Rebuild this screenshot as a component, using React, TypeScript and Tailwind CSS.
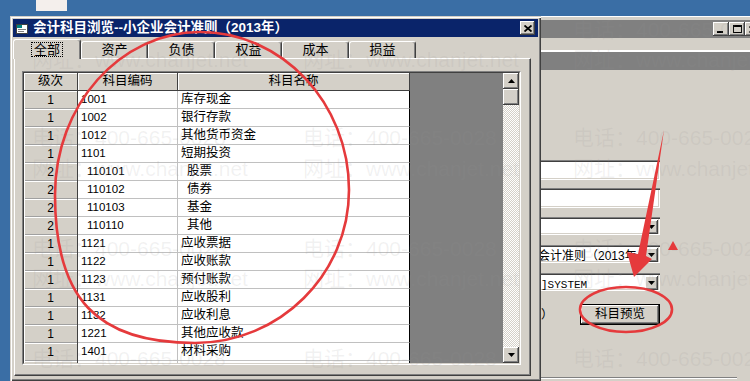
import React from 'react';

const raised =
  'bg-[#d4d0c8] shadow-[inset_-1px_-1px_#404040,inset_1px_1px_#ffffff,inset_-2px_-2px_#808080,inset_2px_2px_#d4d0c8]';

const rows: [string, string, string, boolean][] = [
  ['1', '1001', '库存现金', false],
  ['1', '1002', '银行存款', false],
  ['1', '1012', '其他货币资金', false],
  ['1', '1101', '短期投资', false],
  ['2', '110101', '股票', true],
  ['2', '110102', '债券', true],
  ['2', '110103', '基金', true],
  ['2', '110110', '其他', true],
  ['1', '1121', '应收票据', false],
  ['1', '1122', '应收账款', false],
  ['1', '1123', '预付账款', false],
  ['1', '1131', '应收股利', false],
  ['1', '1132', '应收利息', false],
  ['1', '1221', '其他应收款', false],
  ['1', '1401', '材料采购', false],
];

const tabs = ['全部', '资产', '负债', '权益', '成本', '损益'];

const TEL = '电话：400-665-0028';
const WEB = '网址：www.chanjet.net';

// watermark spots of the screenshot
const marks = [
  { c: 'left-[32px] top-[48px]', t: WEB },
  { c: 'left-[303px] top-[48px]', t: WEB },
  { c: 'left-[573px] top-[18px]', t: TEL },
  { c: 'left-[573px] top-[48px]', t: WEB },
  { c: 'left-[32px] top-[126px]', t: TEL },
  { c: 'left-[303px] top-[126px]', t: TEL },
  { c: 'left-[573px] top-[126px]', t: TEL },
  { c: 'left-[32px] top-[157px]', t: WEB },
  { c: 'left-[303px] top-[157px]', t: WEB },
  { c: 'left-[573px] top-[157px]', t: WEB },
  { c: 'left-[32px] top-[237px]', t: TEL },
  { c: 'left-[303px] top-[237px]', t: TEL },
  { c: 'left-[573px] top-[237px]', t: TEL },
  { c: 'left-[32px] top-[267px]', t: WEB },
  { c: 'left-[303px] top-[267px]', t: WEB },
  { c: 'left-[573px] top-[267px]', t: WEB },
  { c: 'left-[32px] top-[347px]', t: TEL },
  { c: 'left-[303px] top-[347px]', t: TEL },
  { c: 'left-[573px] top-[347px]', t: TEL },
];

function Arrow({ up }: { up?: boolean }) {
  return (
    <svg width="7" height="4" viewBox="0 0 7 4">
      <polygon points={up ? '3.5,0 7,4 0,4' : '0,0 7,0 3.5,4'} fill="#000" />
    </svg>
  );
}

function ScrollBtn({ up }: { up?: boolean }) {
  return (
    <div className={`w-[16px] h-[16px] shrink-0 flex items-center justify-center ${raised}`}>
      <Arrow up={up} />
    </div>
  );
}

function Grid() {
  return (
    <div className="w-[499px] h-[294px] flex border border-t-[#808080] border-l-[#808080] border-r-white border-b-white">
      <div className="flex-1 flex overflow-hidden border border-t-[#404040] border-l-[#404040] border-r-[#d4d0c8] border-b-[#d4d0c8]">
        <div className="w-[386px] flex flex-col">
          {/* header */}
          <div className="flex h-[18px] shrink-0 text-[12.5px]">
            <div className="w-[54px] h-full flex items-center justify-center bg-[#d4d0c8] border-r border-b border-[#404040] shadow-[inset_1px_1px_#ffffff]">级次</div>
            <div className="w-[100px] h-full flex items-center justify-center bg-[#d4d0c8] border-r border-b border-[#404040] shadow-[inset_1px_1px_#ffffff]">科目编码</div>
            <div className="w-[232px] h-full flex items-center justify-center bg-[#d4d0c8] border-r border-b border-[#404040] shadow-[inset_1px_1px_#ffffff]">科目名称</div>
          </div>
          {rows.map(([lv, code, name, sub]) => (
            <div key={code} className="flex h-[18px] shrink-0">
              <div className="w-[54px] h-full flex items-center justify-center bg-[#d4d0c8] border-r border-r-[#404040] shadow-[inset_1px_1px_#ffffff,inset_0_-1px_#a0a0a0] text-[12px]">
                {lv}
              </div>
              <div className={`w-[100px] h-full flex items-center bg-white border-r border-b border-[#c0c0c0] text-[11.5px] ${sub ? 'pl-[9px]' : 'pl-[3px]'}`}>
                {code}
              </div>
              <div className={`w-[232px] h-full flex items-center bg-white border-b border-b-[#c0c0c0] border-r border-r-black text-[12.5px] ${sub ? 'pl-[9px]' : 'pl-[3px]'}`}>
                {name}
              </div>
            </div>
          ))}
          <div className="flex flex-1">
            <div className="w-[54px] h-full bg-[#d4d0c8] border-r border-r-[#404040] shadow-[inset_1px_1px_#ffffff]" />
            <div className="w-[100px] h-full bg-white border-r border-[#c0c0c0]" />
            <div className="w-[232px] h-full bg-white border-r border-r-black" />
          </div>
        </div>
        <div className="w-[93px] h-full bg-[#808080]" />
        <div className="w-[16px] h-full flex flex-col bg-[image:repeating-conic-gradient(#d4d0c8_0%_25%,#ffffff_0%_50%)] bg-[length:2px_2px]">
          <ScrollBtn up />
          <div className={`w-[16px] h-[16px] shrink-0 ${raised}`} />
          <div className="flex-1" />
          <ScrollBtn />
        </div>
      </div>
    </div>
  );
}

function Dialog() {
  return (
    <div className="w-[531px] h-full shrink-0 flex flex-col p-[3px] bg-[#d4d0c8] shadow-[inset_1px_1px_#d4d0c8,inset_2px_2px_#ffffff,inset_-1px_-1px_#404040,inset_-2px_-2px_#808080]">
      {/* title bar */}
      <div className="h-[18px] shrink-0 flex items-center bg-[#0a246a] pl-[3px] pr-[3px]">
        <svg width="13" height="13" viewBox="0 0 13 13">
          <rect x="0.5" y="2.5" width="11" height="9" fill="#ffffff" stroke="#404040" />
          <rect x="1" y="3" width="5" height="3" fill="#008080" />
          <rect x="2" y="7" width="8" height="1" fill="#808080" />
          <rect x="2" y="9" width="6" height="1" fill="#808080" />
        </svg>
        <span className="ml-[4px] text-white font-bold text-[13.5px] leading-none">会计科目浏览--小企业会计准则（2013年）</span>
        <div className={`ml-auto w-[15px] h-[14px] flex items-center justify-center ${raised}`}>
          <svg width="8" height="7" viewBox="0 0 8 7">
            <path d="M0.5 0.5 L7.5 6.5 M7.5 0.5 L0.5 6.5" stroke="#000" strokeWidth="1.8" />
          </svg>
        </div>
      </div>
      {/* tabs */}
      <div className="h-[21px] shrink-0 flex items-end text-[13px]">
        {tabs.map((t, i) =>
          i === 0 ? (
            <div key={t} className="relative z-10 w-[68px] h-[20px] -mb-[1px] flex items-center justify-center bg-[#d4d0c8] border-t border-l border-white border-r border-r-[#404040] rounded-t-[3px] shadow-[inset_-1px_0_#808080]">
              <span className="px-[2px] border border-dotted border-black leading-[13px]">{t}</span>
            </div>
          ) : (
            <div key={t} className="w-[67px] h-[17px] flex items-center justify-center bg-[#d4d0c8] border-t border-l border-white border-r border-r-[#404040] rounded-t-[3px] shadow-[inset_-1px_0_#808080]">
              {t}
            </div>
          )
        )}
      </div>
      {/* panel */}
      <div className="w-[517px] h-[318px] ml-[1px] pl-[7px] pt-[12px] border border-t-white border-l-white border-r-[#404040] border-b-[#404040] shadow-[inset_-1px_-1px_#808080]">
        <Grid />
      </div>
    </div>
  );
}

function SmallBtn({ kind }: { kind: 'min' | 'max' | 'close' }) {
  return (
    <div className={`w-[16px] h-[14px] shrink-0 flex items-center justify-center ${raised}`}>
      {kind === 'min' && <div className="w-[6px] h-[2px] bg-black mt-[6px] -ml-[2px]" />}
      {kind === 'max' && <div className="w-[9px] h-[8px] border border-black border-t-2" />}
      {kind === 'close' && (
        <svg width="8" height="7" viewBox="0 0 8 7">
          <path d="M0.5 0.5 L7.5 6.5 M7.5 0.5 L0.5 6.5" stroke="#000" strokeWidth="1.8" />
        </svg>
      )}
    </div>
  );
}

const sunken =
  'bg-white shadow-[inset_0_1px_#808080,inset_0_2px_#404040,inset_-1px_0_#ffffff,inset_0_-1px_#ffffff,inset_-2px_0_#d4d0c8,inset_0_-2px_#d4d0c8]';

function Combo({ children }: { children?: React.ReactNode }) {
  return (
    <div className={`w-[119px] h-[18px] flex items-center overflow-hidden ${sunken}`}>
      <div className="flex-1 overflow-hidden whitespace-nowrap pt-[2px]">{children}</div>
      <div className={`w-[13px] h-[14px] mr-[2px] mt-[2px] flex items-center justify-center ${raised}`}>
        <Arrow />
      </div>
    </div>
  );
}

function RightWindow() {
  return (
    <div className="flex-1 min-w-0 h-full flex flex-col overflow-hidden bg-[#d4d0c8] border-t border-white">
      <div className="h-[3px] shrink-0" />
      <div className="h-[18px] shrink-0 bg-[#808080] flex items-center pl-[172px]">
        <SmallBtn kind="min" />
        <SmallBtn kind="max" />
        <div className="w-[2px]" />
        <SmallBtn kind="close" />
      </div>
      <div className="h-[12px] shrink-0" />
      <div className="h-[2px] shrink-0 bg-white" />
      <div className="h-[18px] shrink-0 bg-[#808080]" />
      <div className="flex flex-col pt-[90px]">
        <div className={`w-[119px] h-[20px] ${sunken}`} />
        <div className={`w-[119px] h-[20px] mt-[8px] ${sunken}`} />
        <div className="mt-[9px]">
          <Combo />
        </div>
        <div className="mt-[10px]">
          <Combo>
            <span className="-ml-[3px] text-[12px]">会计准则（2013年</span>
          </Combo>
        </div>
        <div className="mt-[10px]">
          <Combo>
            <span className="font-['Liberation_Mono',monospace] text-[11px]">]SYSTEM</span>
          </Combo>
        </div>
        <div className="mt-[13px] h-[21px] flex items-center">
          <span className="w-[39px] text-[12px]">）</span>
          <div className="w-[80px] h-[21px] border border-black">
            <div className={`w-full h-full flex items-center justify-center text-[12.5px] ${raised}`}>科目预览</div>
          </div>
        </div>
        <div className="mt-[52px] w-[196px] h-[2px] border-t border-[#808080] border-b border-b-white" />
      </div>
    </div>
  );
}

export default function App() {
  return (
    <div className="relative w-[750px] h-[381px] overflow-hidden bg-[#3a6ea5] flex flex-col font-['Liberation_Sans','Noto_Sans_CJK_SC',sans-serif] text-black">
      <div className="h-[16px] shrink-0">
        <div className="ml-[36px] w-[31px] h-[11px] bg-[#f4efec]" />
      </div>
      <div className="flex flex-1 min-h-0">
        <div className="w-[10px] shrink-0" />
        <Dialog />
        <RightWindow />
      </div>

      {/* watermark */}
      <div className="absolute inset-0 pointer-events-none">
        {marks.map((m, i) => (
          <span key={i} className={`absolute ${m.c} text-[21px] leading-[24px] whitespace-nowrap text-[rgba(150,150,150,0.13)]`}>
            {m.t}
          </span>
        ))}
      </div>

      {/* red markup */}
      <svg className="absolute inset-0 pointer-events-none" width="750" height="381" viewBox="0 0 750 381">
        <path
          d="M200 32 C282 32 349 103 349 190 C349 274 280 343 195 343 C97 343 55 299 55 195 C55 105 120 32 200 32 Z"
          fill="none"
          stroke="#e53a3c"
          strokeWidth="2.6"
        />
        <ellipse cx="626" cy="309.5" rx="46" ry="22.5" fill="none" stroke="#e53a3c" strokeWidth="2.6" />
        <polygon points="664,130 646,256 652,259 634,277 627,252 638,254" fill="#e53a3c" />
        <polygon points="673,241 678,250 668,250" fill="#e53a3c" />
      </svg>
    </div>
  );
}
